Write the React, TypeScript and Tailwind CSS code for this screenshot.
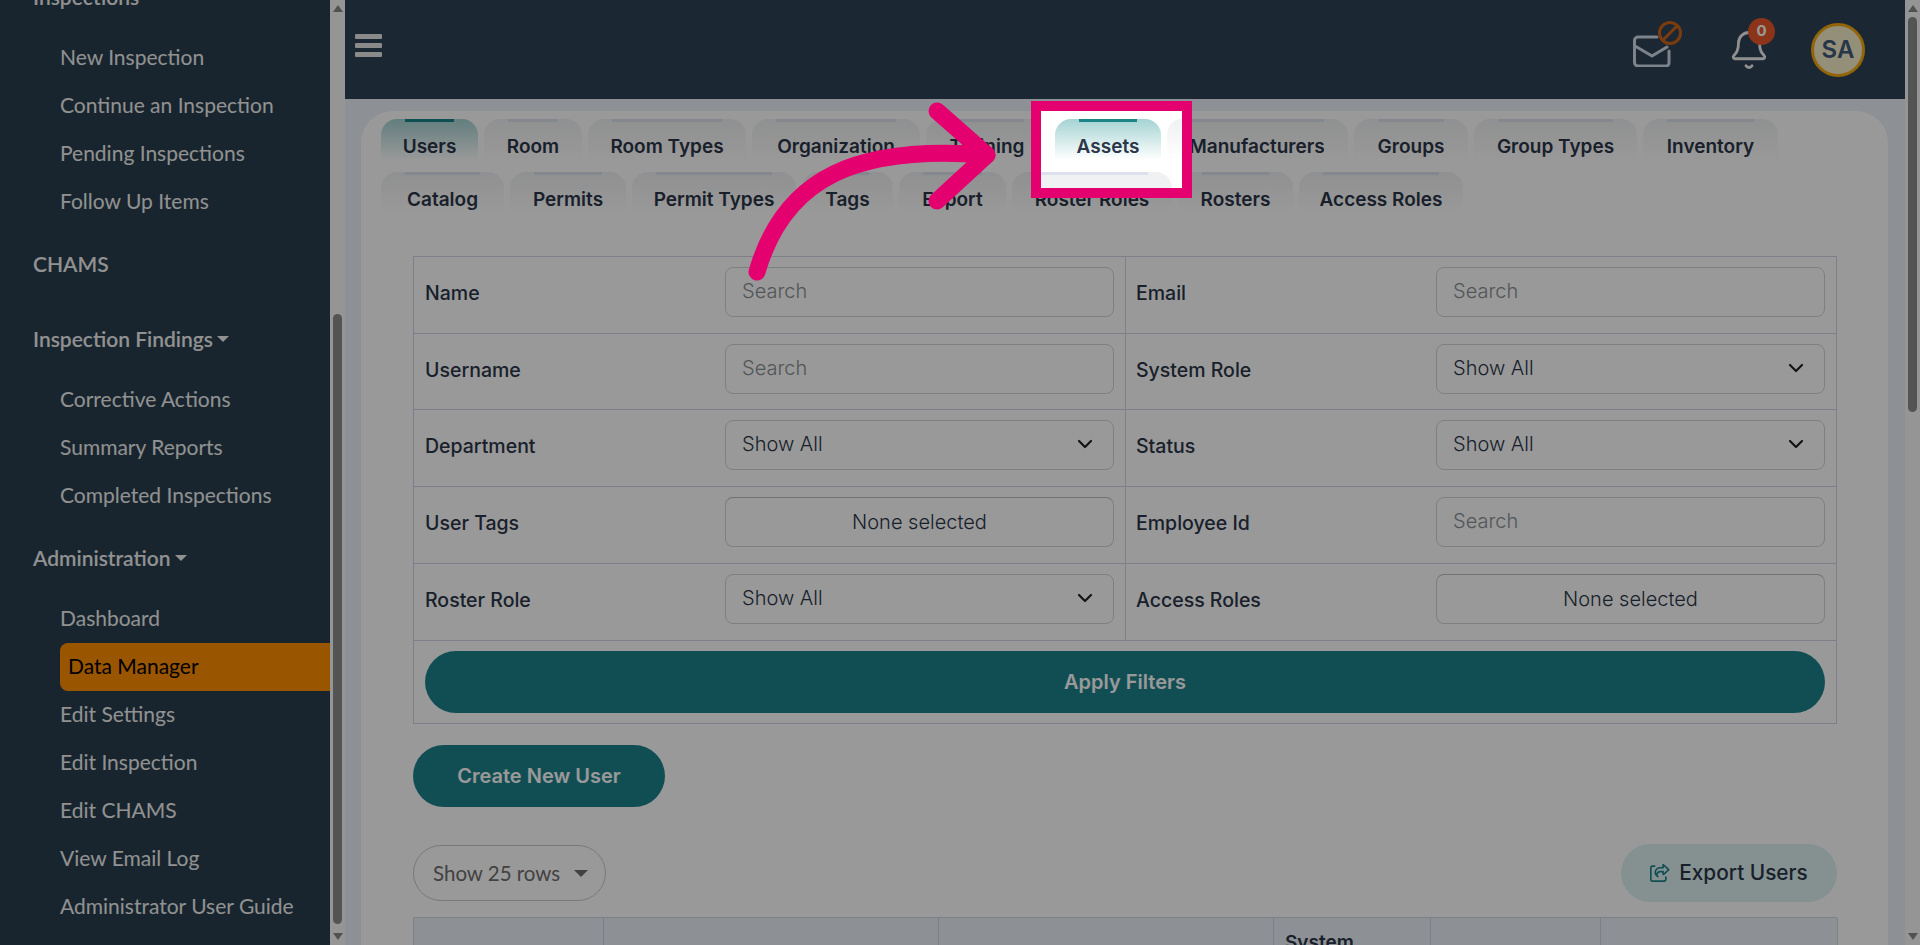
import { Bell, ChevronDown } from "lucide-react";
import { FaRegShareFromSquare } from "react-icons/fa6";

const tabsData = [
  { label: "Users", w: "w-[97px]", active: true },
  { label: "Room", w: "w-[98px]" },
  { label: "Room Types", w: "w-[158px]" },
  { label: "Organization", w: "w-[168px]" },
  { label: "Training", w: "w-[122px]" },
  { label: "Assets", w: "w-[106px]", active: true },
  { label: "Manufacturers", w: "w-[182px]" },
  { label: "Groups", w: "w-[114px]" },
  { label: "Group Types", w: "w-[163px]" },
  { label: "Inventory", w: "w-[135px]" },
  { label: "Catalog", w: "w-[123px]" },
  { label: "Permits", w: "w-[116px]" },
  { label: "Permit Types", w: "w-[164px]" },
  { label: "Tags", w: "w-[91px]" },
  { label: "Export", w: "w-[107px]" },
  { label: "Roster Roles", w: "w-[160px]" },
  { label: "Rosters", w: "w-[115px]" },
  { label: "Access Roles", w: "w-[164px]" },
];

const filterRows = [
  { h: "h-[77px]", cells: [{ label: "Name", kind: "search" }, { label: "Email", kind: "search" }] },
  { h: "h-[76px]", cells: [{ label: "Username", kind: "search" }, { label: "System Role", kind: "select" }] },
  { h: "h-[77px]", cells: [{ label: "Department", kind: "select" }, { label: "Status", kind: "select" }] },
  { h: "h-[77px]", cells: [{ label: "User Tags", kind: "multi" }, { label: "Employee Id", kind: "search" }] },
  { h: "h-[77px]", cells: [{ label: "Roster Role", kind: "select" }, { label: "Access Roles", kind: "multi" }] },
];

function SideItem({ label, active }: { label: string; active?: boolean }) {
  if (active) {
    return (
      <div className="ml-[60px] h-[48px] flex items-center pl-2 pb-[2px] rounded-l-lg bg-[#ff8e00] text-black">{label}</div>
    );
  }
  return <div className="ml-[60px] h-[48px] flex items-center pb-[2px] text-[#f2f2f2]">{label}</div>;
}

function SideHead({ label, caret, className }: { label: string; caret?: boolean; className?: string }) {
  return (
    <div className={`ml-[33px] h-[50px] flex items-center gap-1 font-semibold text-[#f2f2f2] ${className ?? ""}`}>
      {label}
      {caret && <span className="w-0 h-0 border-x-[6px] border-x-transparent border-t-[6px] border-t-[#f2f2f2]" />}
    </div>
  );
}

function Scrollbar({ thumb, className }: { thumb: string; className?: string }) {
  return (
    <div className={`w-[15px] h-full shrink-0 bg-[#f8f8f8] flex flex-col items-center ${className ?? ""}`}>
      <span className="mt-[5px] w-0 h-0 border-x-[5px] border-x-transparent border-b-[7px] border-b-[#888]" />
      <div className={`w-[9px] rounded-full bg-[#8c8c8c] ${thumb}`} />
      <div className="flex-1" />
      <span className="mb-[5px] w-0 h-0 border-x-[5px] border-x-transparent border-t-[7px] border-t-[#888]" />
    </div>
  );
}

function Sidebar() {
  return (
    <div className="w-[330px] h-full shrink-0 bg-[#283e4d] overflow-hidden font-['Lato',sans-serif] text-[21px]">
      <div className="-mt-[28px]">
        <SideHead label="Inspections" caret className="mb-3" />
        <SideItem label="New Inspection" />
        <SideItem label="Continue an Inspection" />
        <SideItem label="Pending Inspections" />
        <SideItem label="Follow Up Items" />
        <SideHead label="CHAMS" className="mt-[13px]" />
        <SideHead label="Inspection Findings" caret className="mt-[25px] mb-3" />
        <SideItem label="Corrective Actions" />
        <SideItem label="Summary Reports" />
        <SideItem label="Completed Inspections" />
        <SideHead label="Administration" caret className="mt-[13px] mb-3" />
        <SideItem label="Dashboard" />
        <SideItem label="Data Manager" active />
        <SideItem label="Edit Settings" />
        <SideItem label="Edit Inspection" />
        <SideItem label="Edit CHAMS" />
        <SideItem label="View Email Log" />
        <SideItem label="Administrator User Guide" />
      </div>
    </div>
  );
}

function Topbar() {
  return (
    <div className="h-[99px] shrink-0 bg-[#2e4155] flex items-center pl-[10px] pr-[40px]">
      <div className="w-[27px] flex flex-col gap-[4px] -mt-[9px]">
        <span className="h-[5px] rounded-[1px] bg-[#e6e6e6]" />
        <span className="h-[5px] rounded-[1px] bg-[#e6e6e6]" />
        <span className="h-[5px] rounded-[1px] bg-[#e6e6e6]" />
      </div>
      <div className="flex-1" />
      {/* envelope with the ban mark */}
      <div className="relative w-[38px] h-[32px] mt-[3px] mr-[57px]">
        <svg viewBox="0 0 38 32" className="w-full h-full" fill="none" stroke="#cfdbe6" strokeWidth="3" strokeLinecap="round" strokeLinejoin="round">
          <path d="M24 2H5a3.5 3.5 0 0 0-3.5 3.5v22A3.5 3.5 0 0 0 5 31h28a3 3 0 0 0 3-3V16" />
          <path d="M2 11l17 10 15-9" />
        </svg>
        <svg viewBox="0 0 26 26" className="absolute -top-[15px] left-[24px] w-[26px] h-[26px]" fill="none" stroke="#cc6519" strokeWidth="3">
          <circle cx="13" cy="13" r="10.5" />
          <path d="M6 20L20 6" />
        </svg>
      </div>
      <div className="relative w-[42px] h-[42px] mr-[41px]">
        <Bell className="w-[42px] h-[42px] text-[#f0f0f0]" strokeWidth={1.6} />
        <span className="absolute -top-[11px] left-[20px] w-[27px] h-[27px] rounded-full bg-[#e9572a] text-white text-[15px] font-bold flex items-center justify-center">
          0
        </span>
      </div>
      <div className="w-[54px] h-[54px] rounded-full border-[3px] border-[#f5a90f] bg-[#f5eeca] text-[#415a78] text-[24px] font-semibold flex items-center justify-center">
        SA
      </div>
    </div>
  );
}

function Tab({ label, w, active }: { label: string; w: string; active?: boolean }) {
  return (
    <button
      className={`${w} h-[48px] px-6 rounded-t-2xl bg-gradient-to-b to-85% ${
        active ? "from-[#a5d3d3] to-white" : "from-[#f0f1f3] to-white"
      }`}
    >
      <span
        className={`block h-full pt-[11px] border-t-[3px] whitespace-nowrap flex justify-center text-[#2b3648] text-[19px] font-semibold ${
          active ? "border-[#1b8487]" : "border-[#dde1eb]"
        }`}
      >
        {label}
      </span>
    </button>
  );
}

function FilterField({ kind }: { kind: string }) {
  if (kind === "search") {
    return (
      <input
        placeholder="Search"
        className="w-[389px] h-[50px] px-4 pb-[2px] rounded-lg border border-[#d1d5db] text-[20px] font-light outline-none placeholder:text-[#8a9093]"
      />
    );
  }
  if (kind === "multi") {
    return (
      <button className="w-[389px] h-[50px] rounded-lg border border-[#d1d5db] border-t-[#b9bcc2] text-[20px] font-light text-[#2b3648]">
        None selected
      </button>
    );
  }
  return (
    <div className="w-[389px] h-[50px] pl-4 pr-[16px] pb-[2px] rounded-lg border border-[#d1d5db] text-[20px] font-light text-[#2b3648] flex items-center justify-between">
      Show All
      <ChevronDown className="w-[24px] h-[24px] text-[#222]" strokeWidth={2.2} />
    </div>
  );
}

function FilterTable() {
  return (
    <div className="border border-[#d1d5e0]">
      {filterRows.map((row) => (
        <div key={row.cells[0].label} className={`${row.h} grid grid-cols-[712px_1fr] border-b border-[#d1d5e0]`}>
          {row.cells.map((cell, i) => (
            <div
              key={cell.label}
              className={`flex items-start justify-between pt-[10px] pr-[11px] ${i === 0 ? "pl-[11px] border-r border-[#d1d5e0]" : "pl-[10px]"}`}
            >
              <span className="mt-[12px] text-[19.5px] font-medium text-[#2b3648]">{cell.label}</span>
              <FilterField kind={cell.kind} />
            </div>
          ))}
        </div>
      ))}
      <div className="h-[82px] px-[11px] pt-[10px]">
        <button className="w-full h-[62px] rounded-full bg-[#1d828c] text-white text-[20px] font-semibold">
          Apply Filters
        </button>
      </div>
    </div>
  );
}

export default function App() {
  return (
    <div className="relative w-[1920px] h-[945px] overflow-hidden flex bg-[#ecf0f7] font-['Inter',sans-serif]">
      <Sidebar />
      <Scrollbar thumb="mt-[302px] h-[610px]" />

      <div className="flex-1 min-w-0 h-full flex flex-col">
        <Topbar />
        <div className="flex-1 min-h-0 overflow-hidden pt-3 pl-4 pr-[17px]">
          <div className="rounded-t-[32px] bg-white h-[1000px] pt-2">
            <div className="pl-5 pr-5 flex flex-wrap gap-x-[6px] gap-y-[5px]">
              {tabsData.map((t) => (
                <Tab key={t.label} label={t.label} w={t.w} active={t.active && t.label === "Users"} />
              ))}
            </div>

            <div className="mt-9 ml-[52px] mr-[51px]">
              <FilterTable />

              <button className="mt-[21px] block w-[252px] h-[62px] rounded-full bg-[#1d828c] text-white text-[20px] font-semibold">
                Create New User
              </button>

              <div className="mt-[37px] h-[58px] flex items-center justify-between">
                <div className="w-[193px] h-[56px] rounded-full border border-[#c6c9ce] pl-[19px] flex items-center gap-[14px] text-[20.5px] text-[#6e6e6e] font-['Lato',sans-serif]">
                  Show 25 rows
                  <span className="w-0 h-0 border-x-[7px] border-x-transparent border-t-[7px] border-t-[#6e6e6e]" />
                </div>
                <button className="w-[216px] h-[58px] rounded-full bg-[#dcf2f0] flex items-center justify-center gap-[9px] text-[20.8px] font-medium text-[#2b3648]">
                  <FaRegShareFromSquare className="w-[20px] h-[18px] text-[#1d828c]" />
                  Export Users
                </button>
              </div>

              <div className="mt-[15px] h-[100px] grid grid-cols-[190px_335px_335px_157px_170px_237px] bg-[#ecf0f7] border-t border-l border-[#d1d5e0] text-[19px] font-semibold text-[#2b3648]">
                <div className="border-r border-[#d1d5e0]" />
                <div className="border-r border-[#d1d5e0]" />
                <div className="border-r border-[#d1d5e0]" />
                <div className="border-r border-[#d1d5e0] pl-[11px] pt-[11px]">System</div>
                <div className="border-r border-[#d1d5e0]" />
                <div className="border-r border-[#d1d5e0]" />
              </div>
            </div>
          </div>
        </div>
      </div>

      <Scrollbar thumb="mt-[5px] h-[395px]" />

      {/* walkthrough overlay: spotlight on the Assets tab */}
      <div className="absolute left-[1041px] top-[111px] w-[141px] h-[77px] overflow-hidden bg-white shadow-[0_0_0_10px_#e5006f,0_0_0_3000px_rgba(0,0,0,0.4)]">
        <div className="absolute left-[14px] top-[8px]">
          <Tab label="Assets" w="w-[106px]" active />
        </div>
        <div className="absolute -left-[29px] top-[61px] w-[160px] h-[48px] rounded-t-2xl bg-[#f0f1f3]">
          <div className="mx-6 h-[3px] bg-[#dde1eb]" />
        </div>
        <div className="absolute left-[126px] top-[8px] w-[30px] h-[48px] rounded-t-2xl bg-gradient-to-b to-85% from-[#f0f1f3] to-white" />
      </div>
      <svg className="absolute inset-0 pointer-events-none" width="1920" height="945" fill="none" stroke="#e5006f" strokeWidth="17" strokeLinecap="round" strokeLinejoin="round">
        <path d="M757 272C785 175 860 145 987 155" />
        <path d="M937 111L987 155L937 201" />
      </svg>
    </div>
  );
}
